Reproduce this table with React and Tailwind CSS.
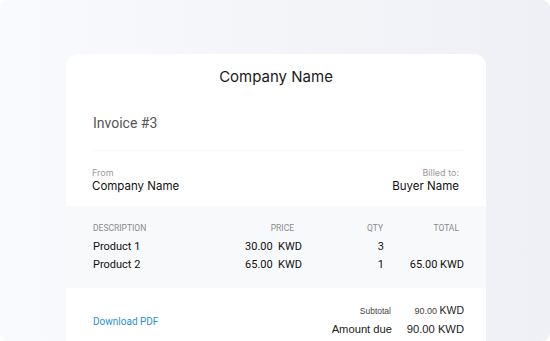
export default function App() {
  const geo = { fontFamily: '"Inter", "Noto Sans", sans-serif' };
  const rob = { fontFamily: 'Roboto, "Noto Sans", sans-serif' };
  const helv = { fontFamily: '"Liberation Sans", Arial, sans-serif' };

  const rows = [
    { name: "Product 1", price: "30.00", qty: "3", total: "" },
    { name: "Product 2", price: "65.00", qty: "1", total: "65.00 KWD" },
  ];

  return (
    <div className="w-[550px] h-[341px] bg-white">
      <div className="w-[550px] h-[341px] rounded-[8px] overflow-hidden bg-gradient-to-r from-[#f8fafd] to-[#eef0f5] pt-[54px] pl-[66px] pr-[64px]">
        <div className="h-[300px] rounded-t-[12px] bg-white flex flex-col">
          {/* header */}
          <div className="h-[46px] flex items-center justify-center text-[15px] text-[#1a1a1a]" style={geo}>
            Company Name
          </div>
          <div className="h-[50px] pt-[13px] pl-[27px]">
            <div className="text-[14px] leading-[20px] text-[#555]" style={rob}>Invoice #3</div>
          </div>
          <div className="ml-[27px] mr-[23px] h-px bg-[#f7f8fa]" />

          {/* parties */}
          <div className="h-[55px] pt-[15px] pl-[26px] pr-[27px] flex justify-between" style={geo}>
            <div className="flex flex-col">
              <span className="text-[9px] leading-[13px] text-[#9a9a9a]">From</span>
              <span className="text-[11.5px] leading-[14px] text-[#111]">Company Name</span>
            </div>
            <div className="flex flex-col items-end">
              <span className="text-[9px] leading-[13px] text-[#9a9a9a]">Billed to:</span>
              <span className="text-[11.5px] leading-[14px] text-[#111]">Buyer Name</span>
            </div>
          </div>

          {/* line items */}
          <div className="h-[82px] bg-[#f8f9fb] pt-[16px] pl-[27px]" style={rob}>
            <div className="flex h-[12px] items-center text-[8.5px] text-[#8a8a8a] uppercase">
              <div className="w-[150px]">Description</div>
              <div className="w-[59px] text-right pr-[8px]">Price</div>
              <div className="w-[82px] text-right pr-[1px]">Qty</div>
              <div className="w-[80px] text-right pr-[5px]">Total</div>
            </div>
            <div className="mt-[5px] flex flex-col gap-[2px]">
              {rows.map((r) => (
                <div key={r.name} className="flex h-[16px] items-center text-[11px] text-[#111]">
                  <div className="w-[150px]">{r.name}</div>
                  <div className="w-[59px] text-right whitespace-pre">{r.price}  KWD</div>
                  <div className="w-[82px] text-right">{r.qty}</div>
                  <div className="w-[80px] text-right">{r.total}</div>
                </div>
              ))}
            </div>
          </div>

          {/* totals */}
          <div className="flex-1 flex pl-[27px] pr-[22px] pt-[16px]">
            <div className="flex-1 pt-[12px] text-[10px] leading-[12px] text-[#2b8fd0]" style={rob}>
              Download PDF
            </div>
            <div className="flex flex-col items-end" style={helv}>
              <div className="flex items-center h-[14px]">
                <span className="text-[8.5px] text-[#444]">Subtotal</span>
                <span className="w-[73px] text-right text-[9px] text-[#444]">
                  90.00 <span className="text-[10.5px] text-[#222]">KWD</span>
                </span>
              </div>
              <div className="flex items-center h-[18px] mt-[2px]">
                <span className="text-[11.2px] text-[#222]">Amount due</span>
                <span className="w-[72px] text-right text-[11.2px] text-[#222]">90.00 KWD</span>
              </div>
            </div>
          </div>
        </div>
      </div>
    </div>
  );
}
